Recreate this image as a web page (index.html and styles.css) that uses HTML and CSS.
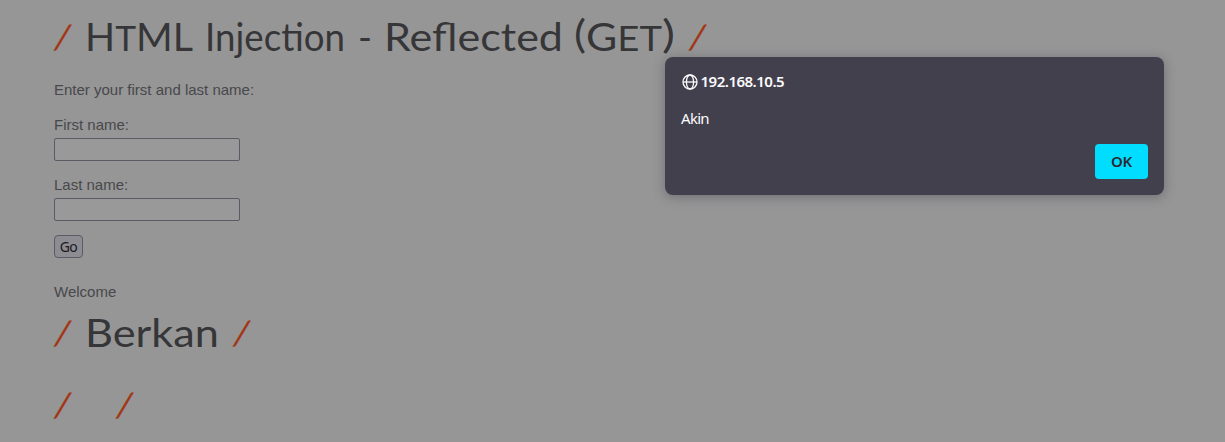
FILE: index.html
```html
<!DOCTYPE html>
<html lang="en">
<head>
<meta charset="utf-8">
<title>HTML Injection - Reflected (GET)</title>
<link rel="stylesheet" href="styles.css">
</head>
<body>
<main class="page">
  <h1 class="title">
    <svg width="660" height="72">
      <text class="slash" transform="translate(-1 49) skewX(-11)" x="0" y="0">/</text>
      <text x="31" y="51" textLength="108" lengthAdjust="spacingAndGlyphs">H<tspan class="small">T</tspan>ML</text>
      <text x="151" y="51" textLength="140" lengthAdjust="spacingAndGlyphs">Injection</text>
      <text x="304" y="51" textLength="14" lengthAdjust="spacingAndGlyphs">-</text>
      <text x="330" y="51" textLength="179" lengthAdjust="spacingAndGlyphs">Reflected</text>
      <text x="520" y="48" textLength="12" lengthAdjust="spacingAndGlyphs">(</text>
      <text x="532" y="51" textLength="76" lengthAdjust="spacingAndGlyphs">G<tspan class="small">ET</tspan></text>
      <text x="608" y="48" textLength="13" lengthAdjust="spacingAndGlyphs">)</text>
      <text class="slash" transform="translate(634 49) skewX(-11)" x="0" y="0">/</text>
    </svg>
  </h1>
  <p class="intro">Enter your first and last name:</p>
  <form class="form">
    <label class="field">First name:<input class="input" type="text"></label>
    <label class="field">Last name:<input class="input" type="text"></label>
    <button class="go" type="button">Go</button>
  </form>
  <p class="welcome">Welcome</p>
  <h1 class="title">
    <svg width="220" height="72">
      <text class="slash" transform="translate(-1 43) skewX(-11)" x="0" y="0">/</text>
      <text x="31" y="45" textLength="134" lengthAdjust="spacingAndGlyphs">Berkan</text>
      <text class="slash" transform="translate(178 43) skewX(-11)" x="0" y="0">/</text>
    </svg>
  </h1>
  <h1 class="title">
    <svg width="220" height="60">
      <text class="slash" transform="translate(-1 43) skewX(-11)" x="0" y="0">/</text>
      <text class="slash" transform="translate(61 43) skewX(-11)" x="0" y="0">/</text>
    </svg>
  </h1>
</main>
<section class="dialog" role="dialog">
  <header class="origin">
    <svg class="globe" width="16" height="16" viewBox="0 0 16 16" fill="none" stroke="currentColor" stroke-width="1.3">
      <circle cx="8" cy="8" r="7"/>
      <ellipse cx="8" cy="8" rx="3.6" ry="7"/>
      <path d="M1 8h14"/>
    </svg>
    <span>192.168.10.5</span>
  </header>
  <p class="message">Akin</p>
  <button class="ok" type="button">OK</button>
</section>
</body>
</html>
```
FILE: styles.css
```css
* { box-sizing: border-box; }
body {
  margin: 0;
  height: 442px;
  overflow: hidden;
  background: #969697;
  color: #48484b;
  font: 15px/20px "Liberation Sans", Arial, sans-serif;
}
.page { padding-left: 54px; }
.title { margin: 0; height: 72px; font: 400 38px/1 Lato, sans-serif; }
.title svg { display: block; overflow: visible; fill: #363638; }
.title .small { font-size: 34px; }
.title .slash { fill: #a23513; stroke: #a23513; stroke-width: .4; font-size: 33px; }
.intro { margin: 8px 0 15px; }
.form { display: flex; flex-direction: column; align-items: flex-start; }
.field { display: flex; flex-direction: column; gap: 3px; margin-bottom: 14px; }
.input {
  width: 186px;
  height: 23px;
  border: 1px solid #5b5a65;
  border-radius: 2px;
  background: #99999a;
}
.go {
  width: 29px;
  height: 23px;
  padding: 0;
  border: 1px solid #5b5a65;
  border-radius: 4px;
  background: #8d8c92;
  color: #19191d;
  font: 14px/22px "Noto Sans", sans-serif;
  letter-spacing: -.5px;
}
.welcome { margin: 24px 0 0; }
.dialog {
  position: absolute;
  left: 665px;
  top: 57px;
  width: 499px;
  height: 138px;
  padding: 14px 16px 16px;
  display: flex;
  flex-direction: column;
  border-radius: 8px;
  background: #43404d;
  color: #fbfbfe;
  box-shadow: 0 2px 12px rgba(40, 40, 45, .35);
  font: 15px/20px "Noto Sans", sans-serif;
  letter-spacing: -.5px;
}
.origin { display: flex; align-items: center; gap: 3px; font-weight: 600; }
.globe { margin: 1px 0 0 .5px; }
.message { margin: 17px 0 0; letter-spacing: -.7px; }
.ok {
  width: 53px;
  height: 35px;
  margin: auto 0 0 auto;
  padding: 0;
  border: 0;
  border-radius: 4px;
  background: #00ddff;
  color: #2b2a33;
  font: 600 15px/35px "Noto Sans", sans-serif;
  letter-spacing: -.3px;
}
```
